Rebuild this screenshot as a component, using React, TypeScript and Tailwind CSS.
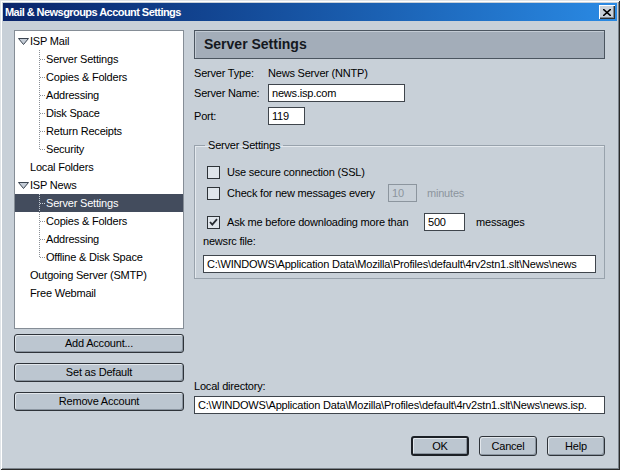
import { ReactNode } from "react";

type TreeRow = {
  label: string;
  kind: "root" | "top" | "child";
  last?: boolean;
  selected?: boolean;
};

const rows: TreeRow[] = [
  { label: "ISP Mail", kind: "root" },
  { label: "Server Settings", kind: "child" },
  { label: "Copies & Folders", kind: "child" },
  { label: "Addressing", kind: "child" },
  { label: "Disk Space", kind: "child" },
  { label: "Return Receipts", kind: "child" },
  { label: "Security", kind: "child", last: true },
  { label: "Local Folders", kind: "top" },
  { label: "ISP News", kind: "root" },
  { label: "Server Settings", kind: "child", selected: true },
  { label: "Copies & Folders", kind: "child" },
  { label: "Addressing", kind: "child" },
  { label: "Offline & Disk Space", kind: "child", last: true },
  { label: "Outgoing Server (SMTP)", kind: "top" },
  { label: "Free Webmail", kind: "top" },
];

const Twisty = () => (
  <svg width="11" height="7" viewBox="0 0 11 7" className="mr-[1px]">
    <polygon points="0.5,0.5 10.5,0.5 5.5,6.5" fill="#c4ccd6" stroke="#3a4450" strokeWidth="1" />
  </svg>
);

const Connector = ({ last, light }: { last?: boolean; light?: boolean }) => {
  const c = light ? "#c8d0d8" : "#8a8f96";
  return (
    <svg width="16" height="18" viewBox="0 0 16 18" shapeRendering="crispEdges">
      <line x1="9.5" y1="0" x2="9.5" y2={last ? 10 : 18} stroke={c} strokeDasharray="1 1" />
      <line x1="10" y1="9.5" x2="15" y2="9.5" stroke={c} strokeDasharray="1 1" />
    </svg>
  );
};

const Tree = () => (
  <div className="h-[299px] border border-[#858d96] bg-white pt-[1px] overflow-hidden">
    {rows.map((r, i) => (
      <div
        key={i}
        className={
          r.selected
            ? "flex h-[18px] items-center bg-[#434c5d] text-white"
            : "flex h-[18px] items-center"
        }
      >
        {r.kind === "root" && (
          <div className="flex items-center pl-[3px]">
            <Twisty />
          </div>
        )}
        {r.kind === "top" && <div className="w-[15px]" />}
        {r.kind === "child" && (
          <div className="flex items-center pl-[15px]">
            <Connector last={r.last} light={r.selected} />
          </div>
        )}
        <span className="whitespace-nowrap">{r.label}</span>
      </div>
    ))}
  </div>
);

const Button = ({
  children,
  className,
  def,
}: {
  children: ReactNode;
  className: string;
  def?: boolean;
}) => (
  <div
    className={
      (def
        ? "border-2 border-[#1c2026] "
        : "border border-[#2e3339] ") +
      "flex items-center justify-center rounded-[3px] bg-[#bcc6d0] shadow-[inset_1px_1px_0_#e2e7ec,inset_-1px_-1px_0_#8b95a0] " +
      className
    }
  >
    {children}
  </div>
);

const Field = ({
  children,
  className,
  disabled,
}: {
  children: ReactNode;
  className: string;
  disabled?: boolean;
}) => (
  <div
    className={
      (disabled
        ? "border-[#8c959e] bg-[#c8d0d8] text-[#8c959e] "
        : "border-[#3f454c] bg-white ") +
      "flex h-[18px] items-center overflow-hidden whitespace-nowrap border px-[3px] " +
      className
    }
  >
    {children}
  </div>
);

const Check = ({ checked }: { checked?: boolean }) => (
  <svg width="13" height="13" viewBox="0 0 13 13" shapeRendering="crispEdges" className="ml-[4px] mr-[7px] shrink-0">
    <rect x="0.5" y="0.5" width="12" height="12" fill="#dfe5eb" stroke="#2e3338" />
    {checked && (
      <path d="M3 6 L5.3 8.6 L10 3.2" fill="none" stroke="#262b31" strokeWidth="1.8" shapeRendering="auto" />
    )}
  </svg>
);

const TitleBar = () => (
  <div className="flex h-[18px] items-center justify-between bg-gradient-to-r from-[#0a246a] to-[#2a8ae4] pl-[2px] pr-[2px]">
    <span className="text-[11px] font-bold tracking-[-0.55px] text-white">
      Mail &amp; Newsgroups Account Settings
    </span>
    <div className="flex h-[14px] w-[16px] items-center justify-center bg-[#c8d0d8] shadow-[inset_1px_1px_0_#ffffff,inset_-1px_-1px_0_#303030,inset_-2px_-2px_0_#808890]">
      <svg width="8" height="7" viewBox="0 0 8 7" shapeRendering="crispEdges">
        <path d="M0 0 L8 7 M8 0 L0 7" stroke="#000" strokeWidth="1.6" shapeRendering="auto" />
      </svg>
    </div>
  </div>
);

export default function App() {
  return (
    <div className="flex h-[470px] w-[620px] flex-col bg-[#c8d0d8] p-[3px] font-['Liberation_Sans',Arial,sans-serif] text-[11px] leading-[13px] tracking-[-0.2px] text-black shadow-[inset_1px_1px_0_#e0e4e8,inset_-1px_-1px_0_#2a2a2a,inset_2px_2px_0_#ffffff,inset_-2px_-2px_0_#7c848c]">
      <TitleBar />
      <div className="flex gap-[10px] pl-[11px] pt-[9px]">
        <div className="flex w-[170px] flex-col">
          <Tree />
          <Button className="mt-[5px] h-[19px]">Add Account...</Button>
          <Button className="mt-[10px] h-[19px]">Set as Default</Button>
          <Button className="mt-[10px] h-[19px]">Remove Account</Button>
        </div>

        <div className="flex w-[411px] min-w-0 flex-col">
          <div className="flex h-[29px] items-center border border-[#4b5560] bg-[#a3adb9] pl-[9px] shadow-[inset_1px_1px_0_#c3cbd4]">
            <span className="text-[14px] font-bold tracking-normal text-[#141820]">Server Settings</span>
          </div>

          <div className="mt-[5px] flex h-[18px] items-center">
            <span className="w-[74px]">Server Type:</span>
            <span>News Server (NNTP)</span>
          </div>
          <div className="mt-[2px] flex h-[18px] items-center">
            <span className="w-[74px]">Server Name:</span>
            <Field className="w-[137px]">news.isp.com</Field>
          </div>
          <div className="mt-[5px] flex h-[18px] items-center">
            <span className="w-[74px]">Port:</span>
            <Field className="w-[37px]">119</Field>
          </div>

          <fieldset className="mt-[14px] min-w-0 border border-[#98a2ac] px-[8px] pb-[5px] shadow-[inset_1px_1px_0_#e4e9ee]">
            <legend className="ml-[2px] px-[3px]">Server Settings</legend>
            <div className="mt-[11px] flex h-[18px] items-center">
              <Check />
              <span>Use secure connection (SSL)</span>
            </div>
            <div className="mt-[3px] flex h-[18px] items-center">
              <Check />
              <span className="w-[161px]">Check for new messages every</span>
              <Field className="w-[29px]" disabled>10</Field>
              <span className="ml-[10px] text-[#8c959e]">minutes</span>
            </div>
            <div className="mt-[11px] flex h-[18px] items-center">
              <Check checked />
              <span className="w-[197px]">Ask me before downloading more than</span>
              <Field className="w-[41px]">500</Field>
              <span className="ml-[11px]">messages</span>
            </div>
            <div className="mt-[4px] h-[13px]">newsrc file:</div>
            <Field className="mt-[7px] w-full">
              C:\WINDOWS\Application Data\Mozilla\Profiles\default\4rv2stn1.slt\News\news
            </Field>
          </fieldset>

          <div className="mt-[101px] h-[13px]">Local directory:</div>
          <Field className="mt-[3px] w-full">
            C:\WINDOWS\Application Data\Mozilla\Profiles\default\4rv2stn1.slt\News\news.isp.
          </Field>

          <div className="mt-[22px] flex justify-end gap-[10px]">
            <Button def className="h-[20px] w-[58px]">OK</Button>
            <Button className="h-[20px] w-[58px]">Cancel</Button>
            <Button className="h-[20px] w-[58px]">Help</Button>
          </div>
        </div>
      </div>
    </div>
  );
}
